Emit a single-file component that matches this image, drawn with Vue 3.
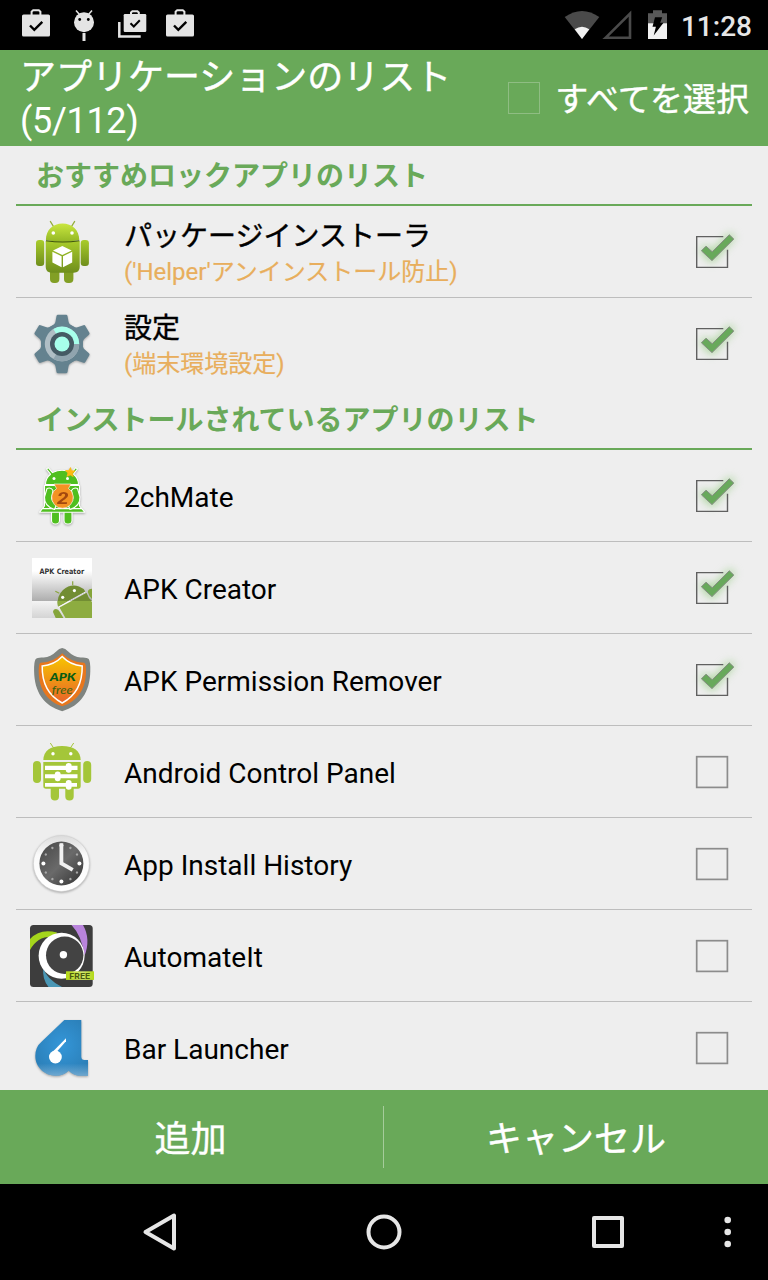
<template>
  <div class="screen">
    <div class="status-bar">
      <svg class="notif" width="210" height="50" viewBox="0 0 210 50">
        <g id="bag">
          <path d="M31.6 15v-3.4l1.6-1.4h5.6l1.6 1.4V15" fill="none" stroke="#e4e4e4" stroke-width="2" />
          <rect x="22" y="14.5" width="28" height="22" rx="1.6" fill="#e4e4e4" />
          <path d="M30 25.5l4.3 4.3 8-8" fill="none" stroke="#000" stroke-width="2.4" />
        </g>
        <g stroke="#e4e4e4" fill="none">
          <path d="M79.5 14.5l-3.5-4M88.5 14.5l3.5-4" stroke-width="1.5" />
          <path d="M84 33v8" stroke-width="3" />
        </g>
        <circle cx="84" cy="22.2" r="10" fill="#e4e4e4" />
        <circle cx="79.7" cy="19.5" r="1.4" />
        <circle cx="88.3" cy="19.5" r="1.4" />
        <path d="M131 14.5v-2l1.4-1.3h5l1.4 1.3v2" fill="none" stroke="#e4e4e4" stroke-width="2" />
        <rect x="123.7" y="14" width="22.6" height="18" rx="1.3" fill="#e4e4e4" />
        <path d="M130.5 23.2l3.3 3.3 6-6.2" fill="none" stroke="#000" stroke-width="2" />
        <path d="M119.3 22v14.4h21.4" fill="none" stroke="#e4e4e4" stroke-width="2.5" />
        <use href="#bag" x="144" />
      </svg>
      <div class="status-right">
        <svg width="106" height="50" viewBox="562 0 106 50">
          <path d="M582 39L564.7 17Q582 5 599.3 17z" fill="#4a4a4a" />
          <path d="M582 39l-7.3-9.7q7.3-5 14.6 0z" fill="#f2f2f2" />
          <path d="M605.5 37.8L630 13.5v24.3z" fill="none" stroke="#4a4a4a" stroke-width="2.6" />
          <path d="M653 10.3h9v2.9h5V24h-19V13.2h5z" fill="#595959" />
          <path d="M648 23.3h19V39h-19z" fill="#f2f2f2" />
          <path d="M655 17.3h7.2l-2 5.5h3.3l-9.8 12.7 2.2-8.8h-3.4z" fill="#000" />
        </svg>
        <span class="clock">11:28</span>
      </div>
    </div>

    <header class="header">
      <h1 class="title"><span class="cjk">アプリケーションのリスト</span><br /><span class="count">(5/112)</span></h1>
      <label class="select-all">
        <span class="select-box"></span>
        <span class="select-text cjk">すべてを選択</span>
      </label>
    </header>

    <main class="content">
      <section v-for="group in groups" :key="group.title" class="group">
        <h2 class="group-title">{{ group.title }}</h2>
        <div v-for="app in group.apps" :key="app.name" class="row" @click="app.checked = !app.checked">
          <svg v-if="app.icon === 'installer'" class="icon" viewBox="0 0 64 64">
            <defs>
              <linearGradient id="droid" x1="0" x2="0" y1="0" y2="1">
                <stop offset="0" stop-color="#a9cc2b" />
                <stop offset="1" stop-color="#6f8e1c" />
              </linearGradient>
              <linearGradient id="droidHead" x1="0" x2="0" y1="0" y2="1">
                <stop offset="0" stop-color="#c9e63f" />
                <stop offset="1" stop-color="#94b825" />
              </linearGradient>
            </defs>
            <path d="M20.4 1.5l4 6.5M44.6 1.5l-4 6.5" stroke="#93ae3a" stroke-width="1.4" stroke-linecap="round" />
            <rect x="20" y="46" width="9.4" height="17" rx="4" fill="#829f25" />
            <rect x="34" y="46" width="9.4" height="17" rx="4" fill="#829f25" />
            <rect x="6" y="20" width="8.2" height="26" rx="3.2" fill="url(#droid)" />
            <rect x="50.7" y="20" width="8.2" height="26" rx="3.2" fill="url(#droid)" />
            <path d="M15.7 21h34v26q0 5.7-6 5.7h-22q-6 0-6-5.7z" fill="url(#droid)" />
            <path d="M15.9 20.2C15.9 10 23 3.6 32.5 3.6S49.3 10 49.3 20.2q-16.8 2.6-33.4 0z" fill="url(#droidHead)" />
            <path d="M16 20.8q16.7 2.4 33.3 0" fill="none" stroke="#3f540f" stroke-width="1.1" />
            <circle cx="23.3" cy="13" r="1.8" fill="#fff" />
            <circle cx="42" cy="13" r="1.8" fill="#fff" />
            <path d="M32.3 26l9.4 4.4-9.4 4.6-9.3-4.6zM22.4 31.7l9.2 4.5v11l-9.2-4.7zM42.2 31.7L33 36.2v11l9.2-4.7z" fill="#fff" />
          </svg>

          <svg v-else-if="app.icon === 'settings'" class="icon shadow" viewBox="0 0 64 64">
            <g fill="#64828f">
              <path
                v-for="n in 6"
                :key="n"
                d="M20.5 15Q25 12.5 25.5 9.5L26.5 4q.2-1.3 1.5-1.3h8q1.3 0 1.500 1.3l1 5.5Q39 12.5 43.500 15L32 32z"
                :transform="`rotate(${n * 60} 32 32)`"
              />
              <circle cx="32" cy="32" r="21" />
            </g>
            <circle cx="32" cy="32" r="17.2" fill="#b0bec5" />
            <path d="M32 32l-8.6-14.9A17.2 17.2 0 0 1 49.2 32z" fill="#a7ffeb" />
            <path d="M32 32h17.2a17.2 17.2 0 0 1-25.8 14.9z" fill="#90a4ae" />
            <circle cx="32" cy="32" r="12" fill="#455a64" />
            <circle cx="32" cy="32" r="7.5" fill="#a7ffeb" />
          </svg>

          <svg v-else-if="app.icon === 'mate'" class="icon shadow" viewBox="0 0 64 64">
            <g fill="#4fbf1f" stroke="#fff" stroke-width="1.1" stroke-linejoin="round">
              <rect x="21.5" y="43" width="8" height="17" rx="3.6" />
              <rect x="34" y="43" width="8" height="17" rx="3.6" />
              <path d="M14.5 21.5h35V42l5.3 6.200H9.600L14.500 42z" />
              <path d="M12.5 44.6h39.5" />
              <path d="M20.5 10.2L16.5 5l1.8-1.4 4.2 5Q32 3.800 41.500 8.600l4.200-5L47.500 5l-4 5.200Q48.500 14 48.500 20.500H15.500Q15.500 14 20.500 10.200z" />
              <path d="M17 24.5q4-1.500 6 2L21.500 34q1 4.500 5 6.500l-2 5Q14 42 14.500 33zM47.500 24.500q-4-1.500-6 2L43 34q-1 4.500-5 6.500l2 5Q50.500 42 50 33z" />
            </g>
            <path d="M24 20h17l-2.500 4.500a10.800 10.800 0 1 1-12 0z" fill="#f39323" stroke="#fff" stroke-width=".6" />
            <path
              d="M40.500 3.600l1 3.100 3.500.3-2.600 2.200.8 3.400-3-1.700-3.200 1.400.9-3.200-2.400-2.500 3.400-.2z"
              fill="#fdb913"
              stroke="#fdb913"
              stroke-width=".8"
            />
            <circle cx="24" cy="14.6" r="1.5" fill="#fff" />
            <circle cx="37.5" cy="14.6" r="1.5" fill="#fff" />
            <text x="27" y="39.6" textLength="11.5" lengthAdjust="spacingAndGlyphs" class="t-mate">2</text>
          </svg>

          <svg v-else-if="app.icon === 'creator'" class="icon" viewBox="0 0 64 64">
            <defs>
              <linearGradient id="wall" x1="0" x2="0" y1="0" y2="1">
                <stop offset=".3" stop-color="#fff" />
                <stop offset="1" stop-color="#adadad" />
              </linearGradient>
              <linearGradient id="floor" x1="0" x2="0" y1="0" y2="1">
                <stop offset="0" stop-color="#f4f4f4" />
                <stop offset="1" stop-color="#d4d4d4" />
              </linearGradient>
            </defs>
            <path d="M2 2h60v43H2z" fill="url(#wall)" />
            <path d="M2 45h60v17H2z" fill="url(#floor)" />
            <text x="9.6" y="17.6" textLength="44.5" lengthAdjust="spacingAndGlyphs" class="t-creator">APK Creator</text>
            <path d="M25.3 35.3l4 2M42.7 25.3v4" stroke="#8aa63c" stroke-width="1.2" />
            <path d="M28 50.5q-2-10 5-16.5 7.500-6.500 16-3.500 4.500 1.600 6.300 5z" fill="#728d33" />
            <path d="M27.6 45H38l-10 5.5q-.5-3-.4-5.5z" fill="#8dac40" />
            <path d="M29.500 51.500L56.500 37q1.500 5.500 5.500 9v16H35.500z" fill="#8dac40" />
            <path d="M42 45l14.500-8q1.500 5 5.500 8z" fill="#728d33" />
            <path d="M23 56q.3-3 3-3 2.500 0 3.500 2.600L33.500 62h-7.800zM57.800 36q.4-3.300 4.200-3.300V43q-3-2.500-4.200-7z" fill="#85a53a" />
            <path d="M28.500 51.300L55.800 36" stroke="#fff" stroke-width=".9" stroke-dasharray="1.6 .8" />
            <circle cx="32.7" cy="41.3" r="1.6" fill="#fff" />
            <circle cx="44.4" cy="34.6" r="1.6" fill="#fff" />
          </svg>

          <svg v-else-if="app.icon === 'remover'" class="icon" viewBox="0 0 64 64">
            <defs>
              <linearGradient id="shield" x1="0" x2="0" y1="0" y2="1">
                <stop offset="0" stop-color="#f7c400" />
                <stop offset="1" stop-color="#e8632a" />
              </linearGradient>
            </defs>
            <path
              d="M32.200 0q3 0 6 3.500 5.500 5.500 12.500 6 6.500-.5 8 1.500 1.800 2.500 1.600 12C60 44 50.500 58 32.200 63.200 14 58 4.300 44 4.100 23q-.2-9.500 1.600-12 1.500-2 8-1.500 7-.5 12.500-6Q29.200 0 32.200 0z"
              fill="#7f8480"
            />
            <path d="M32.200 5.300q8.500 9 21.800 9.500 2 0 2 8.200C56 41 47.500 53.500 32.200 58.300 17 53.500 8.700 41 8.700 23q0-8.200 2-8.200 13-.5 21.500-9.500z" fill="#e8771d" />
            <path d="M32.200 8.500q8 8.500 20 9.500.5 26-20 37-20.500-11-20-37 12-1 20-9.500z" fill="url(#shield)" stroke="#fff" stroke-width="1.5" />
            <text x="19.800" y="33" textLength="26" lengthAdjust="spacingAndGlyphs" class="t-apk">APK</text>
            <text x="21.800" y="45.600" textLength="21" lengthAdjust="spacingAndGlyphs" class="t-free">free</text>
          </svg>

          <svg v-else-if="app.icon === 'panel'" class="icon" viewBox="0 0 64 64">
            <g fill="#a4c639">
              <path d="M20.300 3l3.700 5.500M43.700 3L40 8.500" stroke="#a4c639" stroke-width="1" />
              <path d="M13.300 20Q14 6 32 6t18.700 14z" />
              <path d="M13.300 22h37.400v24q0 2.700-2.700 2.700H16q-2.700 0-2.700-2.700z" />
              <rect x="3" y="21" width="8" height="22" rx="4" />
              <rect x="53.200" y="21" width="8" height="22" rx="4" />
              <path d="M20.700 47H29v9.500q0 4-4.100 4t-4.200-4zM35.300 47h8.400v9.500q0 4-4.200 4t-4.200-4z" />
            </g>
            <g fill="#fff">
              <circle cx="23" cy="13.700" r="1.700" />
              <circle cx="40.800" cy="13.700" r="1.700" />
              <path d="M15 25.700h32.500v4.300H15zM15 34.300h32.500v4H15zM15 43h32v3.800H15z" />
              <rect x="35.800" y="23" width="5.800" height="9.800" rx="2.800" />
              <rect x="24.800" y="31.500" width="5.800" height="9.800" rx="2.800" />
              <rect x="35.800" y="40" width="5.800" height="9.800" rx="2.800" />
            </g>
          </svg>

          <svg v-else-if="app.icon === 'history'" class="icon shadow" viewBox="0 0 64 64">
            <defs>
              <linearGradient id="rim" x1="0" x2="0" y1="0" y2="1">
                <stop offset="0" stop-color="#dcdcdc" />
                <stop offset=".35" stop-color="#fafafa" />
                <stop offset="1" stop-color="#fff" />
              </linearGradient>
              <linearGradient id="dial" x1="0" x2="1" y1="0" y2="1">
                <stop offset="0" stop-color="#454545" />
                <stop offset=".5" stop-color="#6a6a6a" />
                <stop offset="1" stop-color="#303030" />
              </linearGradient>
            </defs>
            <circle cx="31.400" cy="31.500" r="28" fill="url(#rim)" stroke="#d0d0d0" stroke-width=".6" />
            <circle cx="31.400" cy="31.500" r="22" fill="url(#dial)" />
            <circle
              v-for="n in 12"
              :key="n"
              cx="31.4"
              cy="13.5"
              :r="n % 3 ? 1.2 : 2"
              :fill="n % 3 ? '#a8a8a8' : '#fff'"
              :transform="`rotate(${n * 30} 31.4 31.5)`"
            />
            <path d="M29.500 11.300h3.800v18.900l10.400 6-2 3.300-12.200-7z" fill="#f2f2f2" />
          </svg>

          <svg v-else-if="app.icon === 'automate'" class="icon" viewBox="0 0 64 64">
            <defs>
              <linearGradient id="badge" x1="0" x2="1">
                <stop offset="0" stop-color="#b3d916" />
                <stop offset=".6" stop-color="#d0e66a" />
                <stop offset="1" stop-color="#b3d916" />
              </linearGradient>
            </defs>
            <rect x="0" y="1" width="62.7" height="62" rx="3.5" fill="#3d3d3d" />
            <path d="M0 15Q10 4 27 8.500L25 13Q8 11 0 26z" fill="#a5d61c" />
            <path d="M41.500 1H53q8 14 1.500 31Q52 12 41.500 1z" fill="#b984dc" />
            <path d="M13.300 44q3 11 18.700 19H18.500Q12 55 13.300 44z" fill="#4a97b5" />
            <circle cx="31.600" cy="31.700" r="23" fill="#fff" />
            <circle cx="34.700" cy="31.300" r="18.700" fill="#434343" />
            <circle cx="33.400" cy="30.800" r="3.700" fill="#fff" />
            <rect x="36" y="47.300" width="28" height="8.600" fill="url(#badge)" />
            <text x="39.300" y="54.600" textLength="21" lengthAdjust="spacingAndGlyphs" class="t-badge">FREE</text>
          </svg>

          <svg v-else class="icon shadow" viewBox="0 0 64 64">
            <defs>
              <radialGradient id="bar" cx=".5" cy=".45" r=".65">
                <stop offset="0" stop-color="#3496d8" />
                <stop offset="1" stop-color="#2a7db5" />
              </radialGradient>
              <linearGradient id="barFade" x1="0" x2="0" y1="0" y2="1">
                <stop offset=".78" stop-color="#9dc3e0" stop-opacity="0" />
                <stop offset="1" stop-color="#9dc3e0" stop-opacity=".6" />
              </linearGradient>
            </defs>
            <path
              v-for="fill in ['url(#bar)', 'url(#barFade)']"
              :key="fill"
              :fill="fill"
              d="M34.300 4h17v36.500q0 3.500 3.200 3.500H58v15.700h-7q-7.500 0-12.300-5-5.200 5-12.900 5C14.500 59.700 5.300 51 5.300 40q0-9 6.200-14.300z"
            />
            <circle cx="25.400" cy="41" r="6.400" fill="#fff" />
            <path d="M22 36.500L36 22.300v3L26.500 36z" fill="#fff" />
          </svg>

          <div class="label">
            <div class="name" :class="{ cjk: app.note }">{{ app.name }}</div>
            <div v-if="app.note" class="note">{{ app.note }}</div>
          </div>

          <svg v-if="app.checked" class="check" viewBox="0 0 48 48">
            <path class="glow" d="M12 23l5-6 7 6L42 5l5 4-23 26z" />
            <path d="M35.300 8.600H8.700v30.800h30.800V21.800" fill="none" stroke="#606060" stroke-width="1.4" />
            <path d="M13.400 22.800l4.600-4.600 6.200 5.600L41.300 6.800l4.500 4.300L24 32.600z" fill="#68a95b" stroke="#858d83" stroke-width="1" />
          </svg>
          <svg v-else class="check" viewBox="0 0 48 48">
            <rect x="8.700" y="8.700" width="30.700" height="30.700" fill="none" stroke="#8c8c8c" stroke-width="1.7" />
          </svg>
        </div>
      </section>
    </main>

    <footer class="actions">
      <button class="action action-add cjk">追加</button>
      <button class="action cjk">キャンセル</button>
    </footer>

    <nav class="nav-bar">
      <svg width="768" height="96" viewBox="0 0 768 96" fill="none" stroke="#e6e6e6" stroke-width="4" stroke-linejoin="round">
        <path d="M174 31.500v33L145.500 48z" />
        <circle cx="384" cy="48" r="15.500" />
        <rect x="594" y="34" width="28" height="28" />
        <g fill="#e6e6e6" stroke="none">
          <circle cx="727.700" cy="36" r="3.300" />
          <circle cx="727.700" cy="48" r="3.300" />
          <circle cx="727.700" cy="60" r="3.300" />
        </g>
      </svg>
    </nav>
  </div>
</template>

<script setup>
import { ref } from 'vue'

const groups = ref([
  {
    title: 'おすすめロックアプリのリスト',
    apps: [
      { name: 'パッケージインストーラ', note: "('Helper'アンインストール防止)", icon: 'installer', checked: true },
      { name: '設定', note: '(端末環境設定)', icon: 'settings', checked: true }
    ]
  },
  {
    title: 'インストールされているアプリのリスト',
    apps: [
      { name: '2chMate', icon: 'mate', checked: true },
      { name: 'APK Creator', icon: 'creator', checked: true },
      { name: 'APK Permission Remover', icon: 'remover', checked: true },
      { name: 'Android Control Panel', icon: 'panel', checked: false },
      { name: 'App Install History', icon: 'history', checked: false },
      { name: 'AutomateIt', icon: 'automate', checked: false },
      { name: 'Bar Launcher', icon: 'bar', checked: false }
    ]
  }
])
</script>

<style>
body {
  margin: 0;
  background: #000;
}
</style>

<style scoped>
.screen {
  width: 768px;
  height: 1280px;
  display: flex;
  flex-direction: column;
  overflow: hidden;
  background: #eee;
  font-family: Roboto, 'Noto Sans CJK JP', sans-serif;
}
.cjk {
  -webkit-text-stroke: 0.4px currentColor;
}
.status-bar {
  height: 50px;
  flex: none;
  display: flex;
  justify-content: space-between;
  background: #000;
}
.status-right {
  display: flex;
  align-items: center;
  gap: 13px;
  padding-right: 16px;
}
.clock {
  color: #e6e6e6;
  font-size: 28px;
  font-weight: 500;
  line-height: 50px;
  padding-top: 3px;
}
.header {
  height: 96px;
  flex: none;
  box-sizing: border-box;
  display: flex;
  align-items: center;
  justify-content: space-between;
  padding: 0 19px 0 20px;
  background: #69a959;
  color: #fff;
}
.title {
  margin: 0;
  padding-top: 4px;
  font-size: 36px;
  font-weight: 400;
  line-height: 43px;
}
.count {
  letter-spacing: -0.3px;
}
.select-all {
  display: flex;
  align-items: center;
  gap: 15px;
  font-size: 33px;
  line-height: 40px;
}
.select-text {
  padding-top: 3px;
}
.select-box {
  width: 30px;
  height: 30px;
  border: 1px solid #8fbd83;
}
.content {
  flex: 1;
  min-height: 0;
  overflow: hidden;
  padding: 0 16px;
}
.group-title {
  height: 60px;
  box-sizing: border-box;
  margin: 0;
  padding: 2px 0 0 20px;
  border-bottom: 2px solid #69a959;
  color: #69a959;
  font-size: 28px;
  font-weight: 700;
  line-height: 58px;
}
.row {
  height: 92px;
  box-sizing: border-box;
  display: flex;
  align-items: center;
  padding: 1px 16px 0 14px;
  border-bottom: 1px solid #bdbdbd;
}
.row:last-child {
  border-bottom-color: transparent;
}
.icon {
  width: 64px;
  height: 64px;
  flex: none;
  overflow: visible;
}
.shadow {
  filter: drop-shadow(0 1px 1px rgba(0, 0, 0, 0.3));
}
.label {
  flex: 1;
  padding: 4px 0 0 30px;
}
.name {
  color: #000;
  font-size: 28px;
  line-height: 36px;
}
.name.cjk {
  padding-top: 1px;
}
.note {
  color: #e8ae5d;
  font-size: 24px;
  line-height: 35px;
  -webkit-text-stroke: 0.2px currentColor;
}
.check {
  width: 48px;
  height: 48px;
  flex: none;
  overflow: visible;
}
.glow {
  fill: #a3d293;
  filter: blur(4px);
}
.actions {
  height: 94px;
  flex: none;
  display: flex;
  align-items: center;
  background: #69a959;
}
.action {
  width: 384px;
  height: 62px;
  flex: none;
  box-sizing: border-box;
  padding: 0 0 2px;
  border: 0;
  background: none;
  color: #fff;
  font: inherit;
  font-size: 36px;
}
.action-add {
  padding-right: 2px;
  border-right: 1px solid #a5cc9b;
}
.nav-bar {
  height: 96px;
  flex: none;
  background: #000;
}
.t-mate {
  font: italic 700 17px Roboto, sans-serif;
  fill: #a3480e;
}
.t-creator {
  font: 700 7.5px 'DejaVu Sans', sans-serif;
  fill: #333;
}
.t-apk {
  font: italic 900 12px Lato, sans-serif;
  fill: #075d12;
}
.t-free {
  font: italic 400 10.5px Lato, sans-serif;
  fill: #38620f;
}
.t-badge {
  font: 700 8px Inter, sans-serif;
  fill: #4b5a10;
}
</style>
